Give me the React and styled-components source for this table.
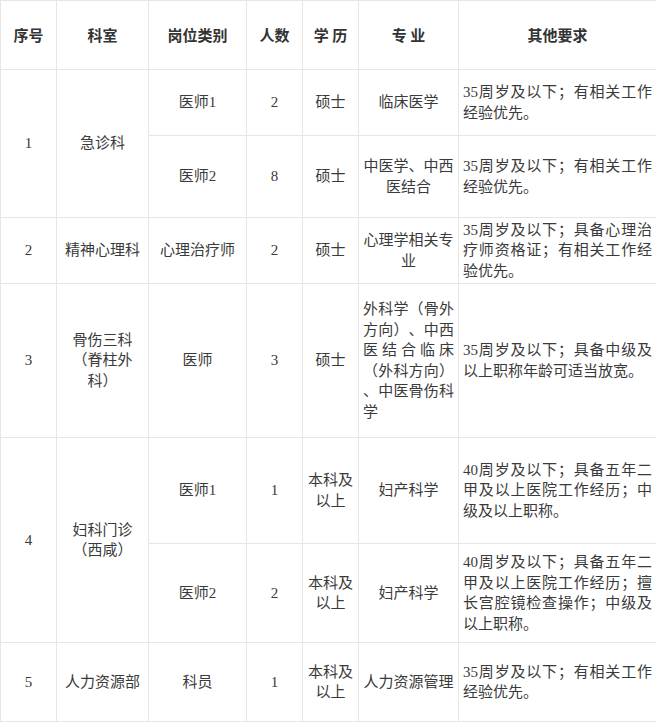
import styled, { createGlobalStyle } from 'styled-components'

const GlobalStyle = createGlobalStyle`
    html, body {
        margin:0;
        padding:0;
        background:#fff;
    }
    body {
        font-family:"Liberation Serif", "Noto Sans CJK SC", serif;
        color:#3a3a3a;
        text-spacing-trim:space-all;
    }
`
const Table = styled.table`
    width:656px;
    table-layout:fixed;
    border-collapse:collapse;
    font-size:15px;
    line-height:20.5px;
`
const Row = styled.tr`
    height:${props => props.$h}px;
`
const HeadCell = styled.th`
    border:1px solid #e6e6e6;
    font-family:"Noto Sans CJK SC", sans-serif;
    font-weight:700;
    color:#333;
    text-align:center;
    vertical-align:middle;
    padding:0 4px;
    white-space:pre;
`
const Cell = styled.td`
    border:1px solid #e6e6e6;
    text-align:${props => props.$align || 'center'};
    text-align-last:${props => props.$align === 'justify' ? 'justify' : 'auto'};
    vertical-align:middle;
    padding:0 4px;
    word-break:normal;
    text-spacing-trim:space-all;
`
const Note = styled(Cell)`
    text-align:justify;
`

const columns = [56, 92, 98, 56, 56, 100, 198]
const headers = ['序号', '科室', '岗位类别', '人数', '学 历', '专 业', '其他要求']

const App = () => {
    return(
        <>
            <GlobalStyle/>
            <Table>
                <colgroup>
                    {columns.map((w, i) => <col key={i} style={{ width: w }}/>)}
                </colgroup>
                <thead>
                    <Row $h={69}>
                        {headers.map(h => <HeadCell key={h}>{h}</HeadCell>)}
                    </Row>
                </thead>
                <tbody>
                    <Row $h={66}>
                        <Cell rowSpan={2}>1</Cell>
                        <Cell rowSpan={2}>急诊科</Cell>
                        <Cell>医师1</Cell>
                        <Cell>2</Cell>
                        <Cell>硕士</Cell>
                        <Cell>临床医学</Cell>
                        <Note>35周岁及以下；有相关工作经验优先。</Note>
                    </Row>
                    <Row $h={82}>
                        <Cell>医师2</Cell>
                        <Cell>8</Cell>
                        <Cell>硕士</Cell>
                        <Cell>中医学、中西医结合</Cell>
                        <Note>35周岁及以下；有相关工作经验优先。</Note>
                    </Row>
                    <Row $h={66}>
                        <Cell>2</Cell>
                        <Cell>精神心理科</Cell>
                        <Cell>心理治疗师</Cell>
                        <Cell>2</Cell>
                        <Cell>硕士</Cell>
                        <Cell>心理学相关专业</Cell>
                        <Note>35周岁及以下；具备心理治疗师资格证；有相关工作经验优先。</Note>
                    </Row>
                    <Row $h={154}>
                        <Cell>3</Cell>
                        <Cell>骨伤三科（脊柱外科）</Cell>
                        <Cell>医师</Cell>
                        <Cell>3</Cell>
                        <Cell>硕士</Cell>
                        <Cell $align="justify">
                            外科学（骨外<br/>方向）、中西<br/>医结合临床<br/>（外科方向）<br/>、中医骨伤科<br/>学
                        </Cell>
                        <Note>35周岁及以下；具备中级及以上职称年龄可适当放宽。</Note>
                    </Row>
                    <Row $h={106}>
                        <Cell rowSpan={2}>4</Cell>
                        <Cell rowSpan={2}>妇科门诊（西咸）</Cell>
                        <Cell>医师1</Cell>
                        <Cell>1</Cell>
                        <Cell>本科及以上</Cell>
                        <Cell>妇产科学</Cell>
                        <Note>40周岁及以下；具备五年二甲及以上医院工作经历；中级及以上职称。</Note>
                    </Row>
                    <Row $h={99}>
                        <Cell>医师2</Cell>
                        <Cell>2</Cell>
                        <Cell>本科及以上</Cell>
                        <Cell>妇产科学</Cell>
                        <Note>40周岁及以下；具备五年二甲及以上医院工作经历；擅长宫腔镜检查操作；中级及以上职称。</Note>
                    </Row>
                    <Row $h={79}>
                        <Cell>5</Cell>
                        <Cell>人力资源部</Cell>
                        <Cell>科员</Cell>
                        <Cell>1</Cell>
                        <Cell>本科及以上</Cell>
                        <Cell>人力资源管理</Cell>
                        <Note>35周岁及以下；有相关工作经验优先。</Note>
                    </Row>
                </tbody>
            </Table>
        </>
    )
}
export default App
